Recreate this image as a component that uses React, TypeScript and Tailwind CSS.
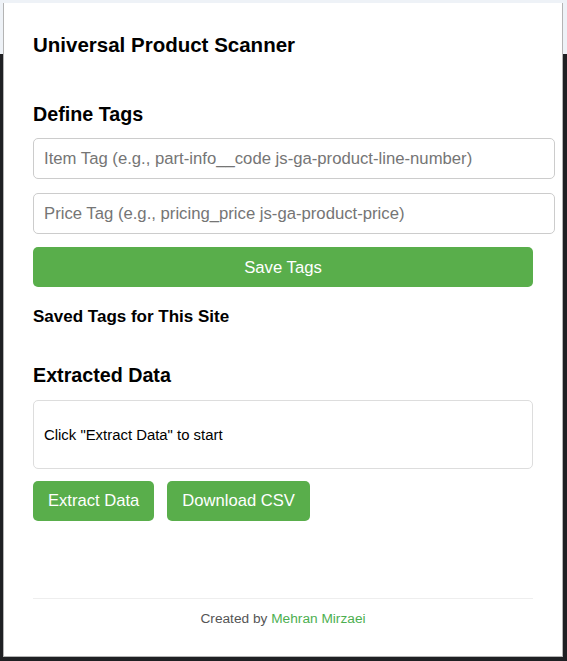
import React from "react";

export default function App() {
  return (
    <div className="h-[661px] w-[567px] overflow-hidden bg-[linear-gradient(to_bottom,#eef2f7_54px,#1f2023_54px)] pt-[3px] pl-[3px] font-['Liberation_Sans',Arial,sans-serif]">
      <div className="flex h-[654px] w-[560px] flex-col border border-t-0 border-[#b4b4b4] bg-white px-[29px] pt-[30px] text-black">
        <h1 className="text-[20.5px] font-bold leading-[23.6px]">Universal Product Scanner</h1>

        <h2 className="mt-[46px] text-[19.7px] font-bold leading-[22.6px]">Define Tags</h2>
        <input
          className="mt-[13px] box-content h-[19px] w-full rounded-[5px] border border-[#cccccc] px-[10px] py-[10px] text-[16.7px] outline-none placeholder:text-[#757575]"
          placeholder="Item Tag (e.g., part-info__code js-ga-product-line-number)"
        />
        <input
          className="mt-[14px] box-content h-[19px] w-full rounded-[5px] border border-[#cccccc] px-[10px] py-[10px] text-[16.7px] outline-none placeholder:text-[#757575]"
          placeholder="Price Tag (e.g., pricing_price js-ga-product-price)"
        />
        <button className="mt-[13px] h-[40px] w-full rounded-[5px] bg-[#59ae4b] text-[16.7px] text-white">
          Save Tags
        </button>
        <h3 className="mt-[20px] text-[17px] font-bold leading-[19.5px]">Saved Tags for This Site</h3>

        <h2 className="mt-[37px] text-[19.7px] font-bold leading-[22.6px]">Extracted Data</h2>
        <div className="mt-[14px] flex h-[69px] items-center rounded-[5px] border border-[#dddddd] px-[10px] text-[14.9px]">
          Click "Extract Data" to start
        </div>
        <div className="mt-[12px] flex gap-[13px]">
          <button className="h-[40px] rounded-[5px] bg-[#59ae4b] px-[15px] text-[16.6px] text-white">
            Extract Data
          </button>
          <button className="h-[40px] rounded-[5px] bg-[#59ae4b] px-[15px] text-[16.6px] text-white">
            Download CSV
          </button>
        </div>

        <footer className="mt-[77px] border-t border-[#eeeeee] pt-[10px] text-center text-[13.7px] text-[#555555]">
          Created by <a className="text-[#4caf50]">Mehran Mirzaei</a>
        </footer>
      </div>
    </div>
  );
}
